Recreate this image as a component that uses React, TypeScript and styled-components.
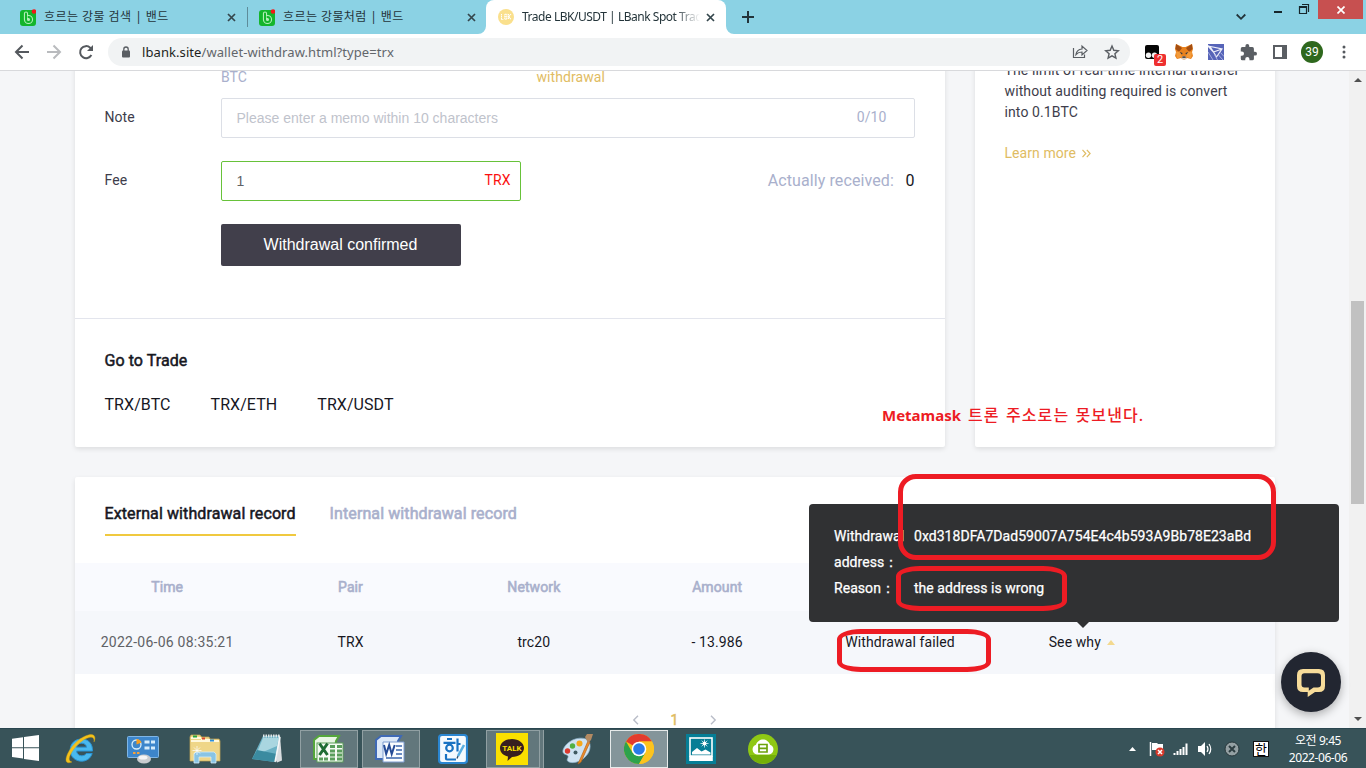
import React from "react";
import styled, { createGlobalStyle } from "styled-components";

const Global = createGlobalStyle`
  * { box-sizing: border-box; }
  body { margin: 0; overflow: hidden; background: #f5f6f8; }
`;

const roboto = `Roboto, "Liberation Sans", sans-serif`;
const ui = `"Noto Sans", "Noto Sans CJK KR", sans-serif`;
const RED = "#ed1c24";

const Screen = styled.div`
  position: relative;
  width: 1366px;
  height: 768px;
  display: flex;
  flex-direction: column;
  overflow: hidden;
  font-family: ${roboto};
  font-size: 14px;
  white-space: nowrap;
`;

/* ---------- browser chrome ---------- */
const TabStrip = styled.div`
  display: flex;
  height: 34px;
  padding-left: 8px;
  background: #8bd2e4;
`;
const Tab = styled.div<{ $active?: boolean; $divider?: boolean }>`
  position: relative;
  display: flex;
  align-items: center;
  width: ${(p) => (p.$active ? 240 : 239)}px;
  height: 34px;
  padding: 0 ${(p) => (p.$active || p.$divider ? 10 : 9)}px 0 12px;
  background: ${(p) => (p.$active ? "#fff" : "transparent")};
  border-radius: ${(p) => (p.$active ? "8px 8px 0 0" : "0")};
  &::after {
    content: "";
    display: ${(p) => (p.$divider ? "block" : "none")};
    position: absolute;
    right: -1px;
    top: 7px;
    width: 1px;
    height: 20px;
    background: #5e8c9a;
  }
`;
const TabFoot = styled.svg<{ $side: "left" | "right" }>`
  position: absolute;
  bottom: 0;
  ${(p) => p.$side}: -8px;
`;
const TabTitle = styled.div<{ $fade?: boolean; $spacing?: number }>`
  flex: 1;
  margin: 0 5px 0 8px;
  overflow: hidden;
  font: 12px/18px ${ui};
  letter-spacing: ${(p) => p.$spacing ?? 0}px;
  color: #24343a;
  ${(p) => p.$fade && "mask-image: linear-gradient(90deg, #000 152px, transparent 178px);"}
`;
const StripTools = styled.div`
  flex: 1;
  display: flex;
  justify-content: space-between;
  padding-left: 15px;
`;
const NewTab = styled.svg`
  margin-top: 10px;
`;
const WindowButtons = styled.div`
  display: flex;
  padding-right: 3px;
`;
const CloseWindow = styled.div`
  display: flex;
  align-items: center;
  justify-content: center;
  width: 45px;
  height: 19px;
  background: #c75050;
`;

const Toolbar = styled.div`
  display: flex;
  align-items: center;
  height: 37px;
  padding: 0 6px;
  background: #fff;
  border-bottom: 1px solid #d8d9dc;
`;
const ToolSlot = styled.div`
  position: relative;
  display: flex;
  align-items: center;
  justify-content: center;
  width: 32px;
  height: 32px;
`;
const AddressBar = styled.div`
  display: flex;
  align-items: center;
  width: 1022px;
  height: 28px;
  margin: 0 6px;
  padding: 0 2px 0 12px;
  border-radius: 14px;
  background: #f1f3f4;
`;
const Url = styled.div`
  flex: 1;
  margin-left: 10px;
  font: 13px/20px ${ui};
  letter-spacing: 0.08px;
  color: #62666b;
  b { font-weight: 400; color: #1d1f22; }
`;
const Badge = styled.span`
  position: absolute;
  left: 18px;
  top: 18px;
  width: 12px;
  height: 12px;
  border-radius: 2px;
  background: #ee3030;
  color: #fff;
  font: 11px/12px ${roboto};
  text-align: center;
`;
const Avatar = styled.span`
  width: 22px;
  height: 22px;
  border-radius: 50%;
  background: #2e681d;
  color: #fff;
  font: 12px/22px ${roboto};
  text-align: center;
`;

/* ---------- page ---------- */
const Viewport = styled.div`
  display: flex;
  height: 657px;
  overflow: hidden;
  background: #f5f6f8;
  letter-spacing: 0.07px;
`;
const Scroller = styled.div`
  flex: 1;
  margin-top: -11px;
  padding-left: 75px;
`;
const ScrollBar = styled.div`
  display: flex;
  flex-direction: column;
  align-items: center;
  justify-content: space-between;
  width: 17px;
  padding: 7px 0;
  background: #f1f1f1;
`;
const Thumb = styled.div`
  width: 13px;
  height: 203px;
  margin-top: 5px;
  background: #c1c1c1;
`;
const TopRow = styled.div`
  display: flex;
  gap: 30px;
  height: 387px;
  margin-bottom: 30px;
`;
const Card = styled.section<{ $w: number; $h?: number }>`
  width: ${(p) => p.$w}px;
  height: ${(p) => (p.$h ? p.$h + "px" : "auto")};
  background: #fff;
  border-radius: 2px;
  box-shadow: 0 2px 5px rgba(0, 0, 0, 0.1);
`;
const Form = styled.div`
  height: 259px;
  padding: 0 30px;
  border-bottom: 1px solid #e3e5ed;
`;
const FormRow = styled.div<{ $h: number; $gap?: number }>`
  display: flex;
  height: ${(p) => p.$h}px;
  margin-bottom: ${(p) => p.$gap ?? 0}px;
`;
const Label = styled.div`
  width: 116px;
  line-height: 38px;
  color: #3e3d4b;
  text-indent: -0.5px;
`;
const Hint = styled.div<{ $gold?: boolean }>`
  width: ${(p) => (p.$gold ? "auto" : "315.500px")};
  padding-top: 7px;
  line-height: 21px;
  color: ${(p) => (p.$gold ? "#dfbc63" : "#a9b0cc")};
`;
const Field = styled.div<{ $w: number; $color: string; $pad: number }>`
  display: flex;
  justify-content: space-between;
  width: ${(p) => p.$w}px;
  height: 40px;
  padding: 0 ${(p) => p.$pad}px 0 14.5px;
  border: 1px solid ${(p) => p.$color};
  border-radius: 2px;
`;
const FieldText = styled.span<{ $color: string }>`
  font: 14px/39px "Liberation Sans", Arial, sans-serif;
  letter-spacing: 0;
  color: ${(p) => p.$color};
`;
const FieldUnit = styled.span<{ $color: string }>`
  line-height: 37px;
  color: ${(p) => p.$color};
`;
const Received = styled.div`
  flex: 1;
  display: flex;
  justify-content: flex-end;
  gap: 11.5px;
  padding-right: 0.5px;
  font-size: 16px;
  line-height: 39px;
  letter-spacing: 0.1px;
  color: #a9b0cc;
  b { font-weight: 400; color: #17171f; }
`;
const Confirm = styled.button`
  width: 240px;
  height: 42px;
  margin-left: 116px;
  padding: 0 1px 1px 0;
  border: 0;
  border-radius: 2px;
  background: #413f4b;
  color: #fff;
  font: 16px "Liberation Sans", Arial, sans-serif;
`;
const Trade = styled.div`
  padding: 31px 29.5px 0;
  font-size: 16px;
  line-height: 22px;
  color: #17171f;
`;
const Faux = styled.span<{ $s?: number }>`
  -webkit-text-stroke: ${(p) => p.$s ?? 0.5}px currentColor;
`;
const Pairs = styled.div`
  display: flex;
  gap: 40px;
  margin-top: 22px;
`;
const Side = styled.div`
  padding: 0 29.5px;
  line-height: 21px;
  letter-spacing: 0.11px;
  color: #3e3d4b;
`;
const LearnMore = styled.div`
  display: flex;
  align-items: center;
  gap: 6px;
  margin-top: 20px;
  letter-spacing: 0.07px;
  color: #dfbc63;
`;
const RecordTabs = styled.div`
  display: flex;
  gap: 34px;
  height: 86px;
  padding: 25px 29.5px 0;
`;
const RecordTab = styled.div<{ $on?: boolean }>`
  height: 34px;
  font-size: 16px;
  line-height: 24px;
  letter-spacing: 0.1px;
  color: ${(p) => (p.$on ? "#17171f" : "#a9b0cc")};
  border-bottom: 2px solid ${(p) => (p.$on ? "#f0c93f" : "transparent")};
`;
const Row = styled.div<{ $head?: boolean }>`
  display: grid;
  grid-template-columns: repeat(6, 183.33px);
  height: ${(p) => (p.$head ? 48 : 63)}px;
  padding-left: 0.5px;
  background: ${(p) => (p.$head ? "#f9fafe" : "#f5f7fb")};
  color: ${(p) => (p.$head ? "#a9b0cc" : "#17171f")};
`;
const Cell = styled.div<{ $color?: string; $spacing?: number; $shift?: number }>`
  display: flex;
  align-items: center;
  justify-content: center;
  height: 62px;
  gap: 6px;
  padding-right: ${(p) => p.$shift ?? 0}px;
  letter-spacing: ${(p) => p.$spacing ?? 0.1}px;
  color: ${(p) => p.$color ?? "inherit"};
`;
const HeadCell = styled(Cell)`
  height: 48px;
`;
const Pager = styled.div`
  display: flex;
  justify-content: center;
  align-items: center;
  gap: 31px;
  height: 20px;
  margin-top: 36px;
  padding-right: 1px;
  color: #dfbc63;
`;

/* ---------- overlays ---------- */
const Tooltip = styled.div`
  position: absolute;
  left: 809px;
  top: 504px;
  width: 530px;
  height: 118px;
  padding: 19px 25px;
  border-radius: 4px;
  background: #303133;
  color: #fff;
  line-height: 26px;
  letter-spacing: 0.04px;
  -webkit-text-stroke: 0.25px #fff;
  &::after {
    content: "";
    position: absolute;
    left: 268px;
    top: 118px;
    border: 6px solid transparent;
    border-top-color: #303133;
    border-bottom: 0;
  }
`;
const TipRow = styled.div`
  display: flex;
`;
const TipLabel = styled.div`
  width: 80px;
  letter-spacing: 0.05px;
  white-space: pre-line;
`;
const Mark = styled.div<{ $x: number; $y: number; $w: number; $h: number; $r: string }>`
  position: absolute;
  left: ${(p) => p.$x}px;
  top: ${(p) => p.$y}px;
  width: ${(p) => p.$w}px;
  height: ${(p) => p.$h}px;
  border: 5px solid ${RED};
  border-radius: ${(p) => p.$r};
`;
const Memo = styled.div`
  position: absolute;
  left: 882px;
  top: 404px;
  display: flex;
  gap: 7px;
  color: ${RED};
  font: 500 16px/22px ${ui};
  letter-spacing: 1.1px;
  word-spacing: 1px;
  b { font-size: 15px; font-weight: 700; letter-spacing: 0; }
`;
const ChatButton = styled.div`
  position: absolute;
  left: 1281px;
  top: 652px;
  width: 60px;
  height: 60px;
  display: flex;
  align-items: center;
  justify-content: center;
  border-radius: 50%;
  background: #222631;
  box-shadow: 0 3px 10px rgba(0, 0, 0, 0.3);
`;

/* ---------- taskbar ---------- */
const TaskBar = styled.div`
  position: relative;
  display: flex;
  height: 40px;
  background: #385359;
  border-top: 1px solid #2a4650;
`;
const Start = styled.div`
  display: flex;
  align-items: center;
  justify-content: center;
  width: 50px;
  padding: 0 0 2px;
`;
const Slot = styled.div`
  display: flex;
  align-items: center;
  justify-content: center;
  width: 62px;
  padding: 1px 2px 0;
`;
const TaskButton = styled.div<{ $state?: "open" | "active" | "stack" }>`
  display: flex;
  align-items: center;
  justify-content: center;
  width: ${(p) => (p.$state === "stack" ? 54 : 58)}px;
  height: 38px;
  margin-right: ${(p) => (p.$state === "stack" ? 4 : 0)}px;
  padding: 0 ${(p) => (p.$state === "stack" || p.$state === "open" ? 2 : 0)}px ${(p) => (p.$state ? 0 : 1)}px 0;
  background: ${(p) => (p.$state === "active" ? "#84959a" : p.$state ? "#62777c" : "transparent")};
  border: 1px solid ${(p) => (p.$state === "active" ? "#e6eaea" : p.$state ? "#91a0a3" : "transparent")};
  box-shadow: ${(p) => (p.$state === "stack" ? "3px 0 0 0 #62777c, 4px 0 0 #91a0a3" : "none")};
`;
const Tray = styled.div`
  flex: 1;
  display: flex;
  align-items: center;
  justify-content: flex-end;
`;
const Clock = styled.div`
  width: 70px;
  margin: 0 13px;
  color: #fff;
  font: 12px/17px ${ui};
  letter-spacing: -0.42px;
  text-align: center;
`;

const CloseX = () => (
  <svg width="11" height="11" viewBox="0 0 11 11">
    <path d="M2 2l7 7M9 2l-7 7" stroke="#34464c" strokeWidth="1.7" />
  </svg>
);
const BandIcon = () => (
  <svg width="16" height="17" viewBox="0 0 16 17">
    <rect y="1" width="16" height="16" rx="3" fill="#14b52c" />
    <path d="M6 4.500v6M6 10.500a2.500 2.500 0 1 0 2.500-2.500" fill="none" stroke="#b4efb8" strokeWidth="4.200" strokeLinecap="round" />
    <path d="M6 4.500v6M6 10.500a2.500 2.500 0 1 0 2.500-2.500" fill="none" stroke="#14b52c" strokeWidth="2" strokeLinecap="round" />
    <circle cx="8.500" cy="10.500" r="1" fill="#b4efb8" />
    <circle cx="14" cy="2.500" r="2.300" fill="#f31717" />
  </svg>
);
const LbkIcon = () => (
  <svg width="16" height="16" viewBox="0 0 16 16">
    <circle cx="8" cy="8" r="8" fill="#fae08d" />
    <path d="M3.500 5v5.500h2M6.800 5.200h2v5H6.800zM6.800 7.800h2M10.500 5v5.500M13 5l-2.200 2.700L13 10.500" fill="none" stroke="#fff" strokeWidth="1.100" strokeDasharray="1.300 .5" />
  </svg>
);
const Fox = () => (
  <svg width="18" height="16" viewBox="0 0 18 16">
    <path d="M1 0l6.500 3h3L17 0l1 5-1 3 1 4-2 3-4-1-2 1.500H8L6 14l-4 1-2-3 1-4-1-3z" fill="#e8821e" />
    <path d="M1 0l6 4-3 4-3.500-3zM17 0l-6 4 3 4 3.500-3z" fill="#a44e12" />
    <path d="M1 8l4-.500 2 5-5 2zM17 8l-4-.500-2 5 5 2z" fill="#f39a39" />
    <path d="M4.500 8l3 1-.500 1.500zM13.500 8l-3 1 .500 1.500z" fill="#233447" />
    <path d="M7 12.500h4l.3 2-1.300 1H8l-1.300-1z" fill="#d9cfc5" />
    <path d="M7.500 12.500h3l.3 1.300H7.200z" fill="#20242a" />
  </svg>
);
const IE = () => (
  <svg width="32" height="32" viewBox="0 0 32 32">
    <path d="M27.500 18H11.500c.3 3 2.500 4.800 5.200 4.800 2 0 3.600-.8 4.500-2.300h6c-1.700 5-5.800 7.700-10.500 7.700C10 28.200 5.200 23.500 5.200 17S10 6 16.600 6c6.800 0 11.200 4.800 10.900 12zM21.600 14.200c-.4-2.500-2.300-4-5-4-2.600 0-4.600 1.500-5.100 4z" fill="#49b9ee" stroke="#2a95d6" strokeWidth="1" />
    <path d="M7 29C1 31.500-.5 28 2.500 21 7 11.500 16 3.500 24 1.800c6-1.200 7 2.700 5 7.200.3-4-1-5.500-5-4.500C16.500 6.500 9 14.500 5.500 21.500c-2 4-1.700 6.800 1.500 7.500z" fill="#f5c21b" stroke="#d9a30c" strokeWidth=".4" />
  </svg>
);
const ControlPanel = () => (
  <svg width="32" height="30" viewBox="0 0 32 30">
    <rect x=".5" y="2.500" width="31" height="21" rx="1" fill="#3d86cb" stroke="#7fb6e6" />
    <circle cx="9.500" cy="10.500" r="4.500" fill="none" stroke="#d9effc" strokeWidth="1.300" />
    <path d="M9.500 10.500V5a5.500 5.500 0 0 1 5 3.500z" fill="#f79f22" />
    <path d="M17.500 8h5M24 8h4M17.500 14h5M24 14h4" stroke="#d5ecfb" strokeWidth="3" />
    <path d="M6 19h2.500M10 19h2.500" stroke="#f5a23b" strokeWidth="2" />
    <ellipse cx="17" cy="25" rx="7" ry="4.500" fill="#c9cccf" />
    <ellipse cx="16" cy="23.500" rx="4.500" ry="2" fill="#f3f4f5" />
  </svg>
);
const Explorer = () => (
  <svg width="32" height="30" viewBox="0 0 32 30">
    <path d="M1 27V3l1-2h9l1.500 2H20l1 2h9l1 2v20z" fill="#efd688" stroke="#c7a753" strokeWidth=".7" />
    <path d="M2 7h28M2 4h10M12 6h9" stroke="#fff8dc" strokeWidth="2" />
    <path d="M4 2.500h4" stroke="#28a33a" strokeWidth="2" />
    <path d="M13 4.500h3" stroke="#d9482c" strokeWidth="2" />
    <path d="M21 6.500h4" stroke="#2b8edb" strokeWidth="2" />
    <path d="M5 29v-9l2-2h18l2 2v9h-5v-6H10v6z" fill="#89c4e4" stroke="#d3ecf7" strokeWidth=".8" />
    <path d="M8 12v9M3.500 16.500h9M5 13.500l6 6M11 13.500l-6 6" stroke="#fff" strokeWidth=".7" />
  </svg>
);
const Notepad = () => (
  <svg width="32" height="30" viewBox="0 0 32 30">
    <path d="M12 2l17-.500 2 25-5 2z" fill="#d9dde0" />
    <path d="M12 2h16l-4 26-23-3z" fill="#6bb1c4" />
    <path d="M12 4h16l-2 8L5 21z" fill="#a9d6e0" />
    <path d="M1 25l23 3 2-8-20-4z" fill="#3b8ba0" />
    <path d="M12 2h17" stroke="#dfe6e8" strokeWidth="3" strokeDasharray="1.500 1" />
    <path d="M24 28l5-25" stroke="#f4f6f7" strokeWidth="1.500" />
  </svg>
);
const Excel = () => (
  <svg width="32" height="30" viewBox="0 0 32 30">
    <path d="M7 2h20l-3 5-2 18H2V6z" fill="#e9f6e4" stroke="#55a63c" strokeWidth="2" />
    <rect x="5" y="9" width="26" height="19" fill="#f7fbf5" stroke="#5d9e5b" />
    <path d="M18 12.500h5M25 12.500h5M18 17h5M25 17h5M18 21h5M25 21h5M7 25h4M12 25h4M18 25h5M25 25h5" stroke="#5a9e5c" strokeWidth="3" />
    <path d="M7.500 9.500l8 11.500M15.500 9.500L7.500 21" stroke="#1f6c33" strokeWidth="3" />
  </svg>
);
const Word = () => (
  <svg width="32" height="30" viewBox="0 0 32 30">
    <path d="M7 2h20l-3 5-2 18H2V6z" fill="#dce8f8" stroke="#3f69b5" strokeWidth="2" />
    <path d="M9 8h21v20H9z" fill="#fbfdff" stroke="#7d9cd0" />
    <path d="M22 12h6M22 16h6M22 20h6M12 24h16" stroke="#3b66ad" strokeWidth="1.500" />
    <path d="M10 11l2.200 9 3-9 2.500 9 3-9" fill="none" stroke="#254b96" strokeWidth="2" />
  </svg>
);
const Hangul = () => (
  <svg width="30" height="30" viewBox="0 0 30 30">
    <rect x="1" y="1" width="28" height="28" rx="3" fill="#f5fafe" stroke="#2a86d1" strokeWidth="2.200" />
    <path d="M9 5h5M5.500 8.800h12M19.500 4.500v13M19.500 10h3M8 20v4.500q0 1 1 1h9" fill="none" stroke="#1972c2" strokeWidth="2.200" />
    <circle cx="11.500" cy="14" r="3.300" fill="none" stroke="#1972c2" strokeWidth="2.200" />
    <path d="M26 11l-6 11" stroke="#58aee2" strokeWidth="2.600" />
    <path d="M20 22l-1 2.500" stroke="#2d4c68" strokeWidth="1.300" />
  </svg>
);
const TalkBox = styled.div`
  position: relative;
  display: flex;
  align-items: center;
  justify-content: center;
  width: 32px;
  height: 32px;
  background: #fbe000;
  color: #fbe000;
  font: bold 8px ${roboto};
  svg { position: absolute; left: 4px; top: 6px; }
  span { position: relative; top: -1px; }
`;
const Talk = () => (
  <TalkBox>
    <svg width="24" height="22" viewBox="0 0 24 22">
      <path d="M12 0c6.700 0 12 4 12 9s-5.300 9-12 9l-4.500 4 .5-4.500C3 16.500 0 13 0 9c0-5 5.300-9 12-9z" fill="#38201f" />
    </svg>
    <span>TALK</span>
  </TalkBox>
);
const Paint = () => (
  <svg width="32" height="32" viewBox="0 0 32 32">
    <path d="M2 17C5 8 17 3 25 6c6 3 5 12 0 17-4 5-12 8-17 6-4-2 0-4-1-6-1-2-6-1-5-6z" fill="#cfe3f2" stroke="#8fb3cc" strokeWidth=".7" />
    <circle cx="6.500" cy="18" r="2.700" fill="#dc3a30" />
    <circle cx="11.500" cy="13" r="2.700" fill="#52b043" />
    <circle cx="18.500" cy="10.500" r="3" fill="#f5a81c" />
    <circle cx="14.500" cy="19.500" r="2" fill="#3f5a61" />
    <path d="M27 8L17 31l3-2 9-20z" fill="#ef8b2a" stroke="#b5651a" strokeWidth=".7" />
    <path d="M24 4l2-3 6 0-2 6-3 3z" fill="#b38a62" />
  </svg>
);
const Chrome = () => (
  <svg width="30" height="30" viewBox="0 0 30 30">
    <circle cx="15" cy="15" r="15" fill="#fbc116" />
    <path d="M15 15L2 7.500A15 15 0 0 1 28 7.500H15z" fill="#e33b2e" />
    <path d="M2 7.500A15 15 0 0 0 15 30l6.500-11.200L15 15 8.500 18.800z" fill="#2da24c" />
    <path d="M15 7.500h13A15 15 0 0 1 15 30l6.500-11.200z" fill="#fcc31e" />
    <circle cx="15" cy="15" r="7.300" fill="#fff" />
    <circle cx="15" cy="15" r="5.800" fill="#2a7be8" />
  </svg>
);
const Photos = () => (
  <svg width="30" height="30" viewBox="0 0 30 30">
    <rect width="30" height="30" fill="#067e96" />
    <rect x="4" y="4" width="22" height="18" fill="none" stroke="#fff" strokeWidth="1.600" />
    <path d="M3.200 22h23.600v5H3.200z" fill="#fff" />
    <path d="M6 20.500v-2.500l5-4 4.500 3.500 4-2 5 3v2z" fill="#fff" />
    <circle cx="18.500" cy="9.500" r="2" fill="#fff" />
    <path d="M18.500 5.500v8M14.500 9.500h8M15.700 6.700l5.600 5.600M21.300 6.700l-5.600 5.600" stroke="#fff" strokeWidth=".7" />
  </svg>
);
const GreenCloud = () => (
  <svg width="30" height="30" viewBox="0 0 30 30">
    <circle cx="15" cy="15" r="15" fill="#8fc814" />
    <path d="M1.500 21a15 15 0 0 0 27 0z" fill="#75b009" />
    <path d="M9 20.500a5 5 0 0 1-1-9.700C9 7.500 12 5.500 15 5.500s6 2 7 5.300a5 5 0 0 1-1 9.700z" fill="#fff" />
    <path d="M11 10.500h8v7.500h-8zM11 14.300h8" fill="none" stroke="#6da30c" strokeWidth="1.700" />
  </svg>
);

const tasks: { icon: React.ReactNode; state?: "open" | "active" | "stack" }[] = [
  { icon: <IE /> },
  { icon: <ControlPanel /> },
  { icon: <Explorer /> },
  { icon: <Notepad /> },
  { icon: <Excel />, state: "open" },
  { icon: <Word />, state: "open" },
  { icon: <Hangul /> },
  { icon: <Talk />, state: "stack" },
  { icon: <Paint /> },
  { icon: <Chrome />, state: "active" },
  { icon: <Photos /> },
  { icon: <GreenCloud /> },
];

export default function App() {
  return (
    <Screen>
      <Global />
      <TabStrip>
        <Tab $divider>
          <BandIcon />
          <TabTitle $spacing={0.45}>흐르는 강물 검색 | 밴드</TabTitle>
          <CloseX />
        </Tab>
        <Tab>
          <BandIcon />
          <TabTitle $spacing={0.42}>흐르는 강물처럼 | 밴드</TabTitle>
          <CloseX />
        </Tab>
        <Tab $active>
          <TabFoot $side="left" width="8" height="8"><path d="M8 0v8H0a8 8 0 0 0 8-8z" fill="#fff" /></TabFoot>
          <TabFoot $side="right" width="8" height="8"><path d="M0 0v8h8a8 8 0 0 1-8-8z" fill="#fff" /></TabFoot>
          <LbkIcon />
          <TabTitle $fade $spacing={-0.48}>Trade LBK/USDT | LBank Spot Trade</TabTitle>
          <CloseX />
        </Tab>
        <StripTools>
          <NewTab width="14" height="14"><path d="M7 1v12M1 7h12" stroke="#22343a" strokeWidth="2" /></NewTab>
          <WindowButtons>
            <svg width="82" height="34" viewBox="0 0 82 34">
              <path d="M.7 14.500l4.300 4.300 4.300-4.300" fill="none" stroke="#22343a" strokeWidth="1.800" />
              <path d="M38 12h8" stroke="#16262b" strokeWidth="2" />
              <path d="M63.500 6.500h7v7h-7zM63.500 7.500h7M66 4.500h6.500V12" fill="none" stroke="#16262b" strokeWidth="1.200" />
            </svg>
            <CloseWindow>
              <svg width="8" height="8"><path d="M.5.5l7 7M7.500.5l-7 7" stroke="#fff" strokeWidth="1.700" /></svg>
            </CloseWindow>
          </WindowButtons>
        </StripTools>
      </TabStrip>

      <Toolbar>
        <ToolSlot>
          <svg width="16" height="16"><path d="M15 8H2M8.500 1.500L2 8l6.500 6.500" fill="none" stroke="#55595e" strokeWidth="2" /></svg>
        </ToolSlot>
        <ToolSlot>
          <svg width="16" height="16"><path d="M1 8h13M7.500 1.500L14 8l-6.500 6.500" fill="none" stroke="#b9bbbe" strokeWidth="2" /></svg>
        </ToolSlot>
        <ToolSlot>
          <svg width="16" height="16">
            <path d="M13.400 11A6 6 0 1 1 12.200 3.700L14 5.500" fill="none" stroke="#55595e" strokeWidth="2" />
            <path d="M15 1v6H9z" fill="#55595e" />
          </svg>
        </ToolSlot>
        <AddressBar>
          <svg width="12" height="13" viewBox="0 0 12 13">
            <rect x="2" y="4.500" width="8" height="7" rx="1" fill="#5a5e63" />
            <path d="M3.800 5V3.200a2.200 2.200 0 0 1 4.400 0V5" fill="none" stroke="#5a5e63" strokeWidth="1.300" />
          </svg>
          <Url><b>lbank.site</b>/wallet-withdraw.html?type=trx</Url>
          <ToolSlot>
            <svg width="16" height="16">
              <path d="M1.500 4v9.500h11v-3" fill="none" stroke="#5a5e63" strokeWidth="1.200" />
              <path d="M4 10.500c.5-3.500 2.500-5.300 6-5.500V2l5 4.500-5 4.500V8c-2.500 0-4.500.8-6 2.500z" fill="none" stroke="#5a5e63" strokeWidth="1.200" />
            </svg>
          </ToolSlot>
          <ToolSlot>
            <svg width="16" height="16"><path d="M8 2l1.800 4.300 4.500.4-3.400 3 1 4.400L8 11.800l-3.900 2.300 1-4.400-3.400-3 4.500-.4z" fill="none" stroke="#5a5e63" strokeWidth="1.400" /></svg>
          </ToolSlot>
        </AddressBar>
        <ToolSlot>
          <svg width="16" height="16">
            <path d="M1 3q0-2 2-2h10q2 0 2 2v10q0 2-2 2H3q-2 0-2-2z" fill="#050505" />
            <circle cx="4.500" cy="11.300" r="2.700" fill="#f2f2f2" /><circle cx="10.500" cy="11.300" r="2.700" fill="#f2f2f2" />
          </svg>
          <Badge>2</Badge>
        </ToolSlot>
        <ToolSlot><Fox /></ToolSlot>
        <ToolSlot>
          <svg width="16" height="16">
            <rect width="16" height="16" fill="#5664b8" />
            <path d="M0 2l14 3-5.500 8-3-5zM5.500 8L14 5M2 2.500l3.500 5.500" fill="none" stroke="#f0f1fa" strokeWidth="1.200" />
            <path d="M10.500 11l4.500 5M6.500 10.500l3 5.500M12.500 8.500l3.500 4M0 8l5 8" fill="none" stroke="#a7afe0" />
          </svg>
        </ToolSlot>
        <ToolSlot>
          <svg width="17" height="17" viewBox="1 1 22 22"><path fill="#5a5e63" d="M20.500 11H19V7a2 2 0 0 0-2-2h-4V3.500a2.500 2.500 0 0 0-5 0V5H4a2 2 0 0 0-2 2v3.800h1.500a2.700 2.700 0 0 1 0 5.400H2V20a2 2 0 0 0 2 2h3.800v-1.500a2.700 2.700 0 0 1 5.400 0V22H17a2 2 0 0 0 2-2v-4h1.500a2.500 2.500 0 0 0 0-5z" /></svg>
        </ToolSlot>
        <ToolSlot>
          <svg width="14" height="14"><path d="M1 1h12v12H1z" fill="#fff" stroke="#5a5e63" strokeWidth="2" /><path d="M9 0h5v14H9z" fill="#5a5e63" /></svg>
        </ToolSlot>
        <ToolSlot><Avatar>39</Avatar></ToolSlot>
        <ToolSlot>
          <svg width="4" height="14"><g fill="#55595e"><circle cx="2" cy="2" r="1.500" /><circle cx="2" cy="7" r="1.500" /><circle cx="2" cy="12" r="1.500" /></g></svg>
        </ToolSlot>
      </Toolbar>

      <Viewport>
        <Scroller>
          <TopRow>
            <Card $w={870}>
              <Form>
                <FormRow $h={38}>
                  <Label />
                  <Hint>BTC</Hint>
                  <Hint $gold>withdrawal</Hint>
                </FormRow>
                <FormRow $h={40} $gap={23}>
                  <Label>Note</Label>
                  <Field $w={694} $color="#dcdfe6" $pad={27.5}>
                    <FieldText $color="#bfc3cc">Please enter a memo within 10 characters</FieldText>
                    <FieldUnit $color="#a9b0cc">0/10</FieldUnit>
                  </Field>
                </FormRow>
                <FormRow $h={40} $gap={23}>
                  <Label>Fee</Label>
                  <Field $w={300} $color="#67c23a" $pad={9.5}>
                    <FieldText $color="#606266">1</FieldText>
                    <FieldUnit $color="#fb1010">TRX</FieldUnit>
                  </Field>
                  <Received>Actually received: <b>0</b></Received>
                </FormRow>
                <Confirm>Withdrawal confirmed</Confirm>
              </Form>
              <Trade>
                <Faux>Go to Trade</Faux>
                <Pairs><span>TRX/BTC</span><span>TRX/ETH</span><span>TRX/USDT</span></Pairs>
              </Trade>
            </Card>
            <Card $w={300}>
              <Side>
                The limit of real-time internal transfer<br />
                without auditing required is convert<br />
                into 0.1BTC
                <LearnMore>
                  Learn more
                  <svg width="9" height="9"><path d="M.5.8l3.300 3.700L.5 8.200M4.800.8l3.300 3.700-3.300 3.700" fill="none" stroke="#dfbc63" strokeWidth="1.200" /></svg>
                </LearnMore>
              </Side>
            </Card>
          </TopRow>
          <Card $w={1200} $h={320}>
            <RecordTabs>
              <RecordTab $on><Faux>External withdrawal record</Faux></RecordTab>
              <RecordTab><Faux $s={0.6}>Internal withdrawal record</Faux></RecordTab>
            </RecordTabs>
            <Row $head>
              {["Time", "Pair", "Network", "Amount", "Status", "Operation"].map((t) => (
                <HeadCell key={t}><Faux $s={0.6}>{t}</Faux></HeadCell>
              ))}
            </Row>
            <Row>
              <Cell $color="#606266" $spacing={0.25}>2022-06-06 08:35:21</Cell>
              <Cell>TRX</Cell>
              <Cell>trc20</Cell>
              <Cell>- 13.986</Cell>
              <Cell $shift={1}>Withdrawal failed</Cell>
              <Cell $shift={4}>See why<svg width="8" height="5"><path d="M0 5l4-5 4 5z" fill="#f3d98f" /></svg></Cell>
            </Row>
            <Pager>
              <svg width="8" height="10"><path d="M6 .8L1.800 5 6 9.200" fill="none" stroke="#b9bdc8" strokeWidth="1.400" /></svg>
              <Faux>1</Faux>
              <svg width="8" height="10"><path d="M2 .8L6.200 5 2 9.200" fill="none" stroke="#b9bdc8" strokeWidth="1.400" /></svg>
            </Pager>
          </Card>
        </Scroller>
        <ScrollBar>
          <svg width="8" height="4"><path d="M0 4l4-4 4 4z" fill="#505050" /></svg>
          <Thumb />
          <svg width="8" height="4"><path d="M0 0l4 4 4-4z" fill="#505050" /></svg>
        </ScrollBar>
      </Viewport>

      <TaskBar>
        <Start>
          <svg width="27" height="26"><path d="M0 3.700L11 2.200V12.300H0zM12 2L27 0v12.300H12zM0 13.300h11v10.300L0 22zM12 13.300h15V26l-15-2z" fill="#fff" /></svg>
        </Start>
        {tasks.map((t, i) => (
          <Slot key={i}><TaskButton $state={t.state}>{t.icon}</TaskButton></Slot>
        ))}
        <Tray>
          <svg width="142" height="20" viewBox="0 0 142 20">
            <path d="M1 12l3.500-4L8 12z" fill="#fff" />
            <path d="M22.500 3v14" stroke="#fff" strokeWidth="1.500" />
            <path d="M24 4h5l1 1h5v7h-6l-1-1h-4z" fill="#fff" />
            <circle cx="32" cy="13" r="4.500" fill="#d9392b" />
            <path d="M30 11l4 4M34 11l-4 4" stroke="#fff" strokeWidth="1.500" />
            <path d="M46.500 16v-2M49.500 16v-4M52.500 16v-6M55.500 16V8M58.500 16V4.500" stroke="#fff" strokeWidth="2" />
            <path d="M70 7h3l4-4v14l-4-4h-3z" fill="#fff" />
            <path d="M79 7q2 3 0 6M81 5q3.500 5 0 10" fill="none" stroke="#fff" strokeWidth="1.200" />
            <circle cx="104" cy="10" r="7" fill="#94a0a3" stroke="#26363a" />
            <path d="M101 7l6 6M107 7l-6 6" stroke="#2d3d41" strokeWidth="2" />
            <rect x="125.500" y="2.500" width="15" height="15" fill="#fff" stroke="#111" />
            <text x="133" y="15" fontSize="13" textAnchor="middle" fontFamily='"Noto Sans CJK KR", sans-serif' fill="#000">한</text>
          </svg>
          <Clock>오전 9:45<br />2022-06-06</Clock>
        </Tray>
      </TaskBar>

      <Tooltip>
        <TipRow>
          <TipLabel>{"Withdrawal\naddress："}</TipLabel>
          <span>0xd318DFA7Dad59007A754E4c4b593A9Bb78E23aBd</span>
        </TipRow>
        <TipRow>
          <TipLabel>Reason：</TipLabel>
          <span>the address is wrong</span>
        </TipRow>
      </Tooltip>
      <Mark $x={898} $y={474} $w={378} $h={86} $r="18px" />
      <Mark $x={896} $y={566} $w={171} $h={45} $r="24px / 10px" />
      <Mark $x={837} $y={629} $w={154} $h={43} $r="24px / 10px" />
      <Memo><b>Metamask</b><span>트론 주소로는 못보낸다.</span></Memo>
      <ChatButton>
        <svg width="30" height="32" viewBox="0 0 30 32">
          <path fillRule="evenodd" fill="#f7dc9a" d="M7 3h16q6 0 6 6v11q0 6-6 6h-4l-7.300 5V26H7q-6 0-6-6V9q0-6 6-6zM8.500 7.200q-3 0-3 3v8.300q0 3 3 3h4.300v3.200l4.700-3.200h4q3.500 0 3.500-3v-8.300q0-3-3.500-3z" />
        </svg>
      </ChatButton>
    </Screen>
  );
}
